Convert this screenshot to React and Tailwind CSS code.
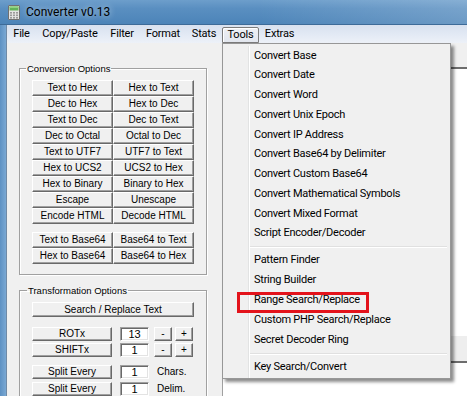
import React from "react";

const UI = { fontFamily: 'Roboto, "Noto Sans", sans-serif' };
const MS = { fontFamily: '"Liberation Sans", Arial, sans-serif' };

function CalcIcon() {
  const cells = [];
  for (let r = 0; r < 3; r++) {
    for (let c = 0; c < 3; c++) {
      cells.push(
        <rect key={`${r}-${c}`} x={2 + c * 3} y={7 + r * 2.5} width="2" height="1.6" fill="#9a9a9a" />
      );
    }
  }
  return (
    <svg width="12" height="15" viewBox="0 0 12 15" className="shrink-0">
      <rect x="0.5" y="0.5" width="11" height="14" rx="0.5" fill="#e4e4e4" stroke="#707070" />
      <rect x="1.5" y="1.5" width="9" height="4" fill="#62b35a" />
      <rect x="1.5" y="1.5" width="9" height="1.5" fill="#8fd27f" />
      {cells}
    </svg>
  );
}

function Btn({ children, className = "" }) {
  return (
    <div
      className={`flex items-center justify-center bg-[#f0f0f0] border border-t-white border-l-white border-r-[#696969] border-b-[#696969] shadow-[inset_-1px_-1px_0_#a0a0a0] text-[10px] leading-none text-black whitespace-nowrap ${className}`}
    >
      {children}
    </div>
  );
}

function Field({ children }) {
  return (
    <div className="w-[29px] h-[14px] flex items-center justify-center bg-white border border-t-[#a0a0a0] border-l-[#a0a0a0] border-r-white border-b-white shadow-[inset_1px_1px_0_#696969,inset_-1px_-1px_0_#e3e3e3] text-[11px] leading-none text-black">
      {children}
    </div>
  );
}

const conv = [
  ["Text to Hex", "Hex to Text"],
  ["Dec to Hex", "Hex to Dec"],
  ["Text to Dec", "Dec to Text"],
  ["Dec to Octal", "Octal to Dec"],
  ["Text to UTF7", "UTF7 to Text"],
  ["Hex to UCS2", "UCS2 to Hex"],
  ["Hex to Binary", "Binary to Hex"],
  ["Escape", "Unescape"],
  ["Encode HTML", "Decode HTML"],
];
const b64 = [
  ["Text to Base64", "Base64 to Text"],
  ["Hex to Base64", "Base64 to Hex"],
];

const group1 = [
  "Convert Base",
  "Convert Date",
  "Convert Word",
  "Convert Unix Epoch",
  "Convert IP Address",
  "Convert Base64 by Delimiter",
  "Convert Custom Base64",
  "Convert Mathematical Symbols",
  "Convert Mixed Format",
  "Script Encoder/Decoder",
];
const group2 = [
  "Pattern Finder",
  "String Builder",
  "Range Search/Replace",
  "Custom PHP Search/Replace",
  "Secret Decoder Ring",
];

function Sep() {
  return (
    <div className="h-[7px] flex items-center pr-[1px]">
      <div className="w-full h-[2px] border-t border-t-[#e0e0e0] border-b border-b-white" />
    </div>
  );
}

function LeftPanel() {
  return (
    <div className="w-[215px] shrink-0 flex flex-col pl-[12px]" style={MS}>
      <fieldset className="w-[188px] mt-[19px] border border-[#a0a0a0] shadow-[inset_1px_1px_0_#fff,1px_1px_0_#fff] pb-[10px]">
        <legend className="ml-[6px] px-[1px] text-[9.5px] leading-[13px] text-black">Conversion Options</legend>
        <div className="px-[12px] pt-[5px]">
          <div className="grid grid-cols-2">
            {conv.map(([a, b]) => (
              <React.Fragment key={a}>
                <Btn className="h-[16px]">{a}</Btn>
                <Btn className="h-[16px]">{b}</Btn>
              </React.Fragment>
            ))}
          </div>
          <div className="grid grid-cols-2 mt-[8px]">
            {b64.map(([a, b]) => (
              <React.Fragment key={a}>
                <Btn className="h-[16px]">{a}</Btn>
                <Btn className="h-[16px]">{b}</Btn>
              </React.Fragment>
            ))}
          </div>
        </div>
      </fieldset>
      <fieldset className="w-[188px] mt-[9px] border border-[#a0a0a0] shadow-[inset_1px_1px_0_#fff,1px_1px_0_#fff] pb-[10px]">
        <legend className="ml-[7px] px-[1px] text-[9.5px] leading-[13px] text-black">Transformation Options</legend>
        <div className="px-[12px] pt-[5px] flex flex-col">
          <Btn className="h-[15px] w-[162px]">Search / Replace Text</Btn>
          <div className="flex items-center mt-[10px] h-[14px]">
            <Btn className="w-[80px] h-[14px]">ROTx</Btn>
            <div className="ml-[8px]"><Field>13</Field></div>
            <Btn className="ml-[5px] w-[18px] h-[14px]">-</Btn>
            <Btn className="ml-[3px] w-[18px] h-[14px]">+</Btn>
          </div>
          <div className="flex items-center mt-[2px] h-[14px]">
            <Btn className="w-[80px] h-[14px]">SHIFTx</Btn>
            <div className="ml-[8px]"><Field>1</Field></div>
            <Btn className="ml-[5px] w-[18px] h-[14px]">-</Btn>
            <Btn className="ml-[3px] w-[18px] h-[14px]">+</Btn>
          </div>
          <div className="flex items-center mt-[8px] h-[14px]">
            <Btn className="w-[80px] h-[14px]">Split Every</Btn>
            <div className="ml-[8px]"><Field>1</Field></div>
            <span className="ml-[8px] text-[10px] leading-none text-black">Chars.</span>
          </div>
          <div className="flex items-center mt-[3px] h-[14px]">
            <Btn className="w-[80px] h-[14px]">Split Every</Btn>
            <div className="ml-[8px]"><Field>1</Field></div>
            <span className="ml-[8px] text-[10px] leading-none text-black">Delim.</span>
          </div>
        </div>
      </fieldset>
    </div>
  );
}

function RightPanel() {
  return (
    <div className="flex-1 min-w-0 flex flex-col">
      <div className="h-[24px] shrink-0 bg-[#f0f0f0]" />
      <div className="h-[269px] shrink-0 bg-white border-t-2 border-t-[#6d6d6d] border-l border-l-[#a0a0a0]" />
      <div className="h-[25px] shrink-0 bg-[#eeeeee]" />
      <div className="flex-1 bg-white border-t-2 border-t-[#6d6d6d] border-l border-l-[#a0a0a0]" />
    </div>
  );
}

function MenuBar() {
  const items = [
    ["File", "w-[29px]"],
    ["Copy/Paste", "w-[68px]"],
    ["Filter", "w-[36px]"],
    ["Format", "w-[46px]"],
    ["Stats", "w-[36px]"],
  ];
  return (
    <div
      className="h-[18px] shrink-0 flex items-stretch bg-[linear-gradient(180deg,#d8e1ef_0%,#e2e9f4_50%,#edf1f8_100%)] text-[11px] tracking-[-0.2px] text-black"
      style={UI}
    >
      {items.map(([t, w]) => (
        <div key={t} className={`${w} flex items-center justify-center`}>{t}</div>
      ))}
      <div className="w-[37px] mt-[2px] flex items-center justify-center border border-[#7b7b7b] rounded-t-[2px] bg-[linear-gradient(180deg,#eef0f4,#e2e6ee)] shadow-[inset_1px_1px_0_#fff]">
        Tools
      </div>
      <div className="w-[41px] flex items-center justify-center">Extras</div>
    </div>
  );
}

function DropMenu() {
  return (
    <div
      className="absolute left-[222px] top-[43px] w-[229px] h-[336px] bg-[#f0f0f0] border border-[#979797] shadow-[3px_3px_3px_rgba(0,0,0,0.45)] flex pt-[2px] px-[2px] text-[11px] tracking-[-0.25px] text-black"
      style={UI}
    >
      <div className="w-[24px] shrink-0 border-r border-r-[#e2e3e3] shadow-[1px_0_0_#fff]" />
      <div className="flex-1 flex flex-col pl-[1px]">
        {group1.map((t) => (
          <div key={t} className="h-[19.75px] flex items-center pl-[4px] whitespace-nowrap">{t}</div>
        ))}
        <Sep />
        {group2.map((t) => (
          <div key={t} className="h-[20px] flex items-center pl-[4px] whitespace-nowrap">{t}</div>
        ))}
        <Sep />
        <div className="h-[20px] flex items-center pl-[4px] whitespace-nowrap">Key Search/Convert</div>
      </div>
    </div>
  );
}

export default function App() {
  return (
    <div className="relative w-[467px] h-[396px] overflow-hidden bg-[#f0f0f0] flex flex-col">
      <div className="h-[25px] shrink-0 flex items-center pl-[8px] border-b border-b-[#3d6b98] bg-[linear-gradient(90deg,rgba(255,255,255,0)_55%,rgba(255,255,255,0.18)_100%),linear-gradient(180deg,#6d9ecb_0%,#5a8fc1_35%,#4c84b8_100%)]">
        <CalcIcon />
        <span
          className="ml-[6px] text-[12px] leading-none text-black [text-shadow:0_0_6px_rgba(255,255,255,0.75)]"
          style={UI}
        >
          Converter v0.13
        </span>
      </div>
      <div className="flex flex-1 min-h-0">
        <div className="w-[7px] shrink-0 bg-[linear-gradient(90deg,#5d91c3,#7aa8d3)] border-r border-r-[#6f8aa6]" />
        <div className="flex-1 min-w-0 flex flex-col">
          <MenuBar />
          <div className="flex flex-1 min-h-0">
            <LeftPanel />
            <RightPanel />
          </div>
        </div>
      </div>
      <DropMenu />
      <div className="absolute left-[237px] top-[292px] w-[132px] h-[21px] border-[3px] border-[#e3131b]" />
    </div>
  );
}
